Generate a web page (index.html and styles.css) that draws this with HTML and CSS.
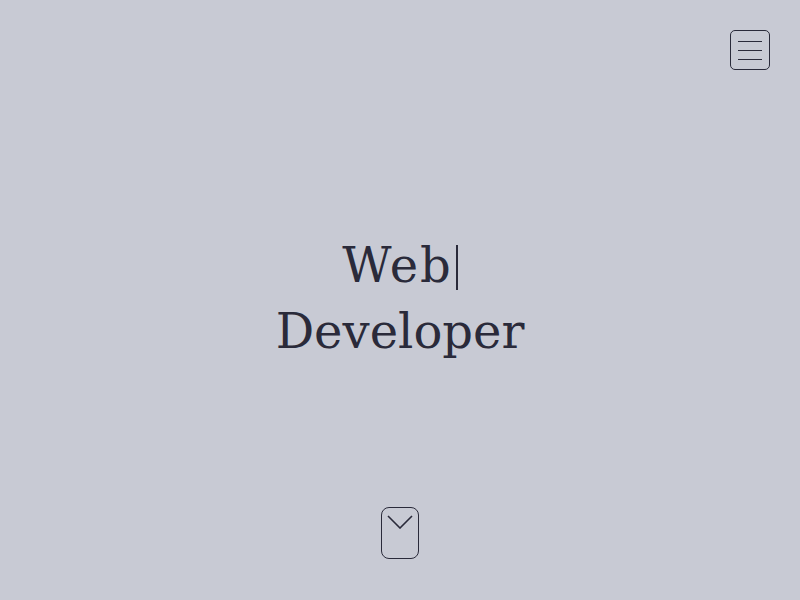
FILE: index.html
```html
<!DOCTYPE html>
<html>
<head>
<meta charset="utf-8">
<link rel="stylesheet" href="styles.css">
</head>
<body>
<div class="page">
  <header class="top">
    <button class="menu" aria-label="Menu">
      <span class="bar"></span>
      <span class="bar"></span>
      <span class="bar"></span>
    </button>
  </header>
  <main class="hero">
    <h1 class="title"><span class="line line-first">Web<span class="caret"></span></span><span class="line">Developer</span></h1>
  </main>
  <footer class="bottom">
    <button class="scroll" aria-label="Scroll down">
      <svg width="26" height="14" viewBox="0 0 26 14"><path d="M1 1 L13 13 L25 1" fill="none" stroke="#2a2a3a" stroke-width="1.6"/></svg>
    </button>
  </footer>
</div>
</body>
</html>
```

FILE: styles.css
```css
html, body {
  margin: 0;
  padding: 0;
  height: 100%;
}
body {
  background: #c8cad4;
  color: #2a2a3a;
  font-family: "DejaVu Serif", serif;
}
.page {
  height: 600px;
  display: flex;
  flex-direction: column;
  box-sizing: border-box;
}
.top {
  display: flex;
  justify-content: flex-end;
  padding: 30px 30px 0 0;
}
.menu {
  width: 40px;
  height: 40px;
  box-sizing: border-box;
  border: 1px solid #2a2a3a;
  border-radius: 5px;
  background: transparent;
  padding: 0;
  display: flex;
  flex-direction: column;
  align-items: center;
  justify-content: center;
  gap: 8px;
}
.bar {
  display: block;
  width: 24px;
  height: 1px;
  background: #2a2a3a;
}
.hero {
  flex: 1;
  display: flex;
  justify-content: center;
  align-items: flex-start;
  padding-top: 162px;
}
.title {
  margin: 0;
  font-weight: 400;
  font-size: 48px;
  line-height: 66px;
  text-align: center;
  display: flex;
  flex-direction: column;
  align-items: center;
}
.line-first {
  letter-spacing: 2px;
}
.caret {
  display: inline-block;
  width: 2px;
  height: 45px;
  margin-left: 3px;
  background: #2a2a3a;
  vertical-align: -8px;
}
.bottom {
  display: flex;
  justify-content: center;
  padding-bottom: 41px;
}
.scroll {
  width: 38px;
  height: 52px;
  box-sizing: border-box;
  border: 1px solid #2a2a3a;
  border-radius: 8px;
  background: transparent;
  padding: 7px 0 0 0;
  display: flex;
  justify-content: center;
  align-items: flex-start;
}
```
